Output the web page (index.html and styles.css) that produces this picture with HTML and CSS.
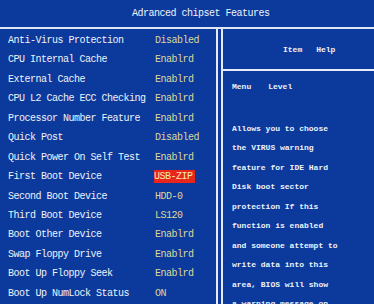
FILE: index.html
```html
<!DOCTYPE html>
<html lang="en">
<head>
    <meta charset="UTF-8">
    <meta name="viewport" content="width=device-width, initial-scale=1.0">
    <title>Advanced chipset Features</title>
    <link rel="stylesheet" href="styles.css">
</head>
<body>
    <div class="screen">
        <div class="title">Adranced chipset Features</div>
        <div class="main">
            <div class="settings">
                <div class="row"><span class="name">Anti-Virus Protection</span><span class="value">Disabled</span></div>
                <div class="row"><span class="name">CPU Internal Cache</span><span class="value">Enablrd</span></div>
                <div class="row"><span class="name">External Cache</span><span class="value">Enablrd</span></div>
                <div class="row"><span class="name">CPU L2 Cache ECC Checking</span><span class="value">Enablrd</span></div>
                <div class="row"><span class="name">Processor Number Feature</span><span class="value">Enablrd</span></div>
                <div class="row"><span class="name">Quick Post</span><span class="value">Disabled</span></div>
                <div class="row"><span class="name">Quick Power On Self Test</span><span class="value">Enablrd</span></div>
                <div class="row"><span class="name">First Boot Device</span><span class="value selected">USB-ZIP</span></div>
                <div class="row"><span class="name">Second Boot Device</span><span class="value">HDD-0</span></div>
                <div class="row"><span class="name">Third Boot Device</span><span class="value">LS120</span></div>
                <div class="row"><span class="name">Boot Other Device</span><span class="value">Enablrd</span></div>
                <div class="row"><span class="name">Swap Floppy Drive</span><span class="value">Enablrd</span></div>
                <div class="row"><span class="name">Boot Up Floppy Seek</span><span class="value">Enablrd</span></div>
                <div class="row"><span class="name">Boot Up NumLock Status</span><span class="value">ON</span></div>
            </div>
            <div class="help">
                <div class="help-head"><span>Item</span><span>Help</span></div>
                <div class="help-body">
                    <div class="menu"><span>Menu</span><span>Level</span></div>
                    <div class="lines">
                        <div>Allows you to choose</div>
                        <div>the VIRUS warning</div>
                        <div>feature for IDE Hard</div>
                        <div>Disk boot sector</div>
                        <div>protection If this</div>
                        <div>function is enabled</div>
                        <div>and someone attempt to</div>
                        <div>write data into this</div>
                        <div>area, BIOS will show</div>
                        <div>a warning message on</div>
                    </div>
                </div>
            </div>
        </div>
    </div>
</body>
</html>
```

FILE: styles.css
```css
body {
    margin: 0;
    padding: 0;
    background-color: #0b3a9c;
    color: #eef2fa;
    font-family: "Liberation Mono", "DejaVu Sans Mono", monospace;
    overflow: hidden;
}
.screen {
    width: 374px;
    height: 304px;
    overflow: hidden;
}
.title {
    height: 27px;
    line-height: 27px;
    padding-left: 132px;
    font-size: 10px;
    letter-spacing: -0.5px;
    border-bottom: 2px solid #dfe6f4;
}
.main {
    display: flex;
}
.settings {
    width: 216px;
    padding-top: 2px;
    border-right: 2px solid #e4eaf6;
}
.row {
    display: flex;
    height: 19.45px;
    line-height: 19.45px;
    font-size: 10px;
    letter-spacing: -0.5px;
}
.name {
    width: 147px;
    padding-left: 8px;
}
.value {
    color: #ddd89a;
}
.value.selected {
    background-color: #e8261c;
    color: #f4ecb0;
    height: 13px;
    line-height: 13px;
    margin-top: 3px;
    padding: 0 2px 0 0;
    margin-left: -1px;
}
.help {
    flex: 1;
    margin-left: 3px;
    border-left: 2px solid #e4eaf6;
    font-size: 8px;
    font-weight: bold;
}
.help-head {
    height: 40px;
    display: flex;
    align-items: center;
    gap: 14px;
    padding-left: 60px;
    border-bottom: 2px solid #e4eaf6;
}
.help-body {
    padding-left: 9px;
}
.menu {
    display: flex;
    gap: 17px;
    margin-top: 10px;
    height: 12px;
    line-height: 12px;
}
.lines {
    margin-top: 26px;
}
.lines div {
    height: 19.45px;
    line-height: 19.45px;
}
```
